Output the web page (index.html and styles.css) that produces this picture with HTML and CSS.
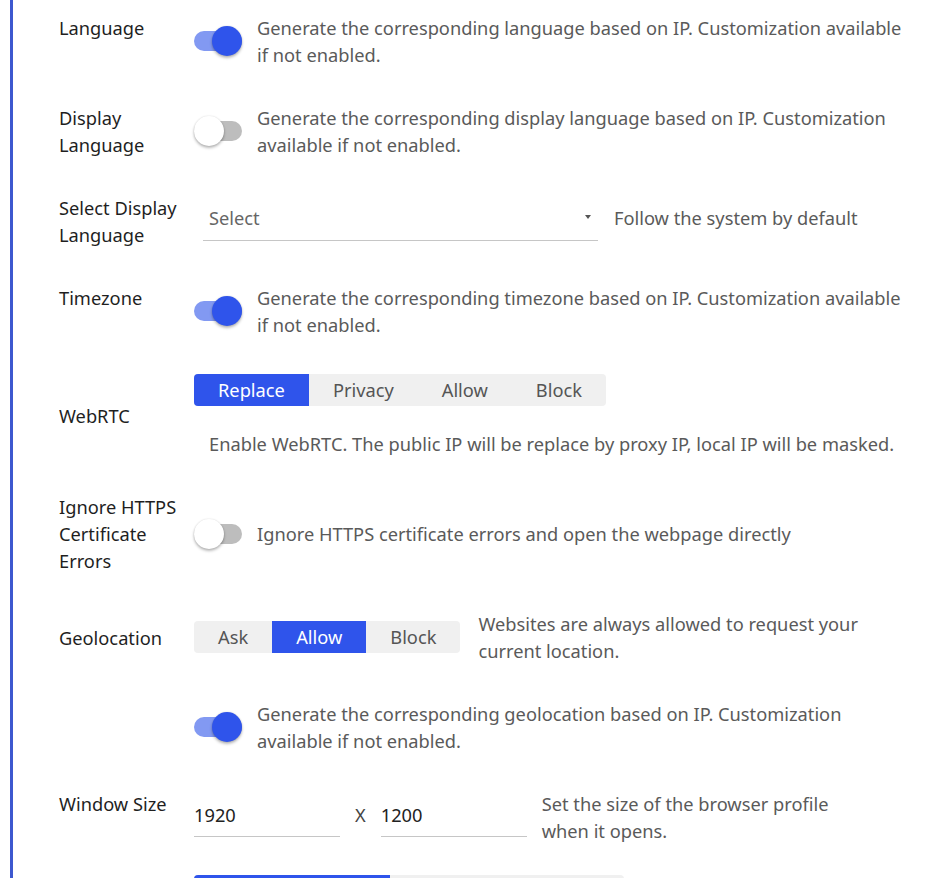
FILE: index.html
```html
<!DOCTYPE html>
<html lang="en">
<head>
<meta charset="utf-8">
<title>Profile settings</title>
<link rel="stylesheet" href="styles.css">
</head>
<body>
<div class="panel">

  <div class="row">
    <div class="label">Language</div>
    <div class="control center">
      <span class="switch on"><span class="track"></span><span class="thumb"></span></span>
      <p class="desc">Generate the corresponding language based on IP. Customization available if not enabled.</p>
    </div>
  </div>

  <div class="row">
    <div class="label">Display Language</div>
    <div class="control center">
      <span class="switch"><span class="track"></span><span class="thumb"></span></span>
      <p class="desc">Generate the corresponding display language based on IP. Customization available if not enabled.</p>
    </div>
  </div>

  <div class="row">
    <div class="label">Select Display Language</div>
    <div class="control top">
      <div class="select">
        <span class="placeholder">Select</span>
        <span class="caret"></span>
      </div>
      <p class="desc select-note">Follow the system by default</p>
    </div>
  </div>

  <div class="row">
    <div class="label">Timezone</div>
    <div class="control center">
      <span class="switch on"><span class="track"></span><span class="thumb"></span></span>
      <p class="desc">Generate the corresponding timezone based on IP. Customization available if not enabled.</p>
    </div>
  </div>

  <div class="row middle">
    <div class="label">WebRTC</div>
    <div class="control column">
      <div class="segmented">
        <span class="seg active">Replace</span>
        <span class="seg">Privacy</span>
        <span class="seg">Allow</span>
        <span class="seg">Block</span>
      </div>
      <p class="desc webrtc-note">Enable WebRTC. The public IP will be replace by proxy IP, local IP will be masked.</p>
    </div>
  </div>

  <div class="row middle">
    <div class="label">Ignore HTTPS Certificate Errors</div>
    <div class="control center">
      <span class="switch"><span class="track"></span><span class="thumb"></span></span>
      <p class="desc">Ignore HTTPS certificate errors and open the webpage directly</p>
    </div>
  </div>

  <div class="row middle">
    <div class="label">Geolocation</div>
    <div class="control center">
      <div class="segmented">
        <span class="seg">Ask</span>
        <span class="seg active">Allow</span>
        <span class="seg">Block</span>
      </div>
      <p class="desc geo-note">Websites are always allowed to request your current location.</p>
    </div>
  </div>

  <div class="row">
    <div class="label"></div>
    <div class="control center">
      <span class="switch on"><span class="track"></span><span class="thumb"></span></span>
      <p class="desc">Generate the corresponding geolocation based on IP. Customization available if not enabled.</p>
    </div>
  </div>

  <div class="row window-row">
    <div class="label">Window Size</div>
    <div class="control top">
      <div class="num-input">1920</div>
      <span class="times">X</span>
      <div class="num-input">1200</div>
      <p class="desc size-note">Set the size of the browser profile when it opens.</p>
    </div>
  </div>

  <div class="row">
    <div class="label"></div>
    <div class="control center">
      <div class="segmented wide">
        <span class="seg active seg-a"></span>
        <span class="seg seg-b"></span>
      </div>
    </div>
  </div>

</div>
</body>
</html>
```

FILE: styles.css
```css
html, body {
  margin: 0;
  padding: 0;
  background: #ffffff;
  overflow: hidden;
}

body {
  font-family: "Noto Sans", "Open Sans", sans-serif;
  font-size: 18.25px;
  line-height: 27px;
  color: #222222;
}

.panel {
  margin-left: 10px;
  border-left: 3px solid #3d58cf;
  min-height: 100vh;
  padding: 14px 40px 0 46px;
  box-sizing: border-box;
}

.row {
  display: flex;
  align-items: flex-start;
  margin-bottom: 36px;
}

.row.middle {
  align-items: center;
}

.window-row {
  margin-bottom: 31px;
}

.label {
  flex: 0 0 128px;
  margin-right: 7px;
  color: #1f1f1f;
}

.control {
  flex: 1;
  display: flex;
  gap: 15px;
  min-width: 0;
}

.control.center {
  align-items: center;
}

.control.top {
  align-items: flex-start;
}

.control.column {
  flex-direction: column;
  gap: 24px;
}

.desc {
  margin: 0;
  color: #5a5a5a;
  flex: 1;
}

/* switch */
.switch {
  position: relative;
  flex: 0 0 48px;
  width: 48px;
  height: 30px;
}

.switch .track {
  position: absolute;
  left: 0;
  right: 0;
  top: 5px;
  height: 20px;
  border-radius: 10px;
  background: #bdbdbd;
}

.switch .thumb {
  position: absolute;
  top: 0;
  left: 0;
  width: 30px;
  height: 30px;
  border-radius: 50%;
  background: #ffffff;
  box-shadow: 0 2px 3px rgba(0, 0, 0, 0.28), 0 0 2px rgba(0, 0, 0, 0.12);
}

.switch.on .track {
  background: #8299f2;
}

.switch.on .thumb {
  left: auto;
  right: 0;
  background: #2f54eb;
}

/* select */
.select {
  margin-left: 9px;
  width: 395px;
  height: 47px;
  border-bottom: 1px solid #c6c6c6;
  display: flex;
  align-items: center;
  justify-content: space-between;
  padding: 0 7px 0 6px;
  box-sizing: border-box;
  flex: 0 0 395px;
}

.placeholder {
  color: #666666;
}

.caret {
  width: 0;
  height: 0;
  border-left: 3.5px solid transparent;
  border-right: 3.5px solid transparent;
  border-top: 4px solid #555555;
}

.select-note {
  line-height: 48px;
  margin-left: 1px;
}

/* segmented */
.segmented {
  display: inline-flex;
  align-self: flex-start;
  background: #f0f0f0;
  border-radius: 4px;
  height: 32px;
  overflow: hidden;
}

.control.center .segmented {
  align-self: center;
}

.seg {
  padding: 0 24px;
  line-height: 32px;
  color: #555555;
}

.seg.active {
  background: #2f54eb;
  color: #ffffff;
}

.seg.wide-pad {
  padding: 0 25px;
}

.webrtc-note {
  padding-left: 15px;
}

.geo-note {
  flex: 0 0 405px;
  margin-left: 3px;
}

/* window size */
.num-input {
  width: 146px;
  height: 47px;
  border-bottom: 1px solid #c6c6c6;
  line-height: 50px;
  color: #222222;
  box-sizing: border-box;
}

.times {
  line-height: 50px;
  color: #444444;
}

.size-note {
  flex: 0 0 305px;
}

.segmented.wide {
  width: 430px;
}

.seg-a {
  flex: 0 0 196px;
  box-sizing: border-box;
}

.seg-b {
  flex: 1;
}
```
